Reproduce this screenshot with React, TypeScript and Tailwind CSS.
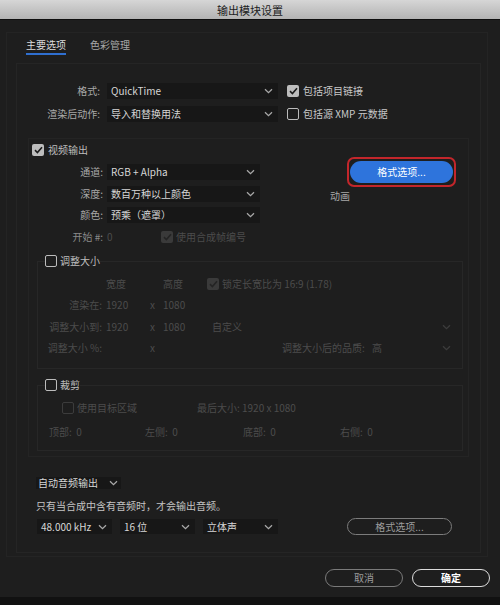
import React from "react";

type CheckProps = {
  checked?: boolean;
  disabled?: boolean;
};

const Check: React.FC<CheckProps> = ({ checked, disabled }) => {
  if (checked) {
    return (
      <span
        className={
          "w-[12px] h-[12px] shrink-0 rounded-[2px] flex items-center justify-center " +
          (disabled ? "bg-[#3a3a3a]" : "bg-[#bdbdbd]")
        }
      >
        <svg width="9" height="8" viewBox="0 0 9 8">
          <path
            d="M1 4.2 3.4 6.5 8 1.2"
            stroke={disabled ? "#242424" : "#1c1c1c"}
            strokeWidth="1.6"
            fill="none"
          />
        </svg>
      </span>
    );
  }
  return (
    <span
      className={
        "w-[12px] h-[12px] shrink-0 rounded-[2px] border-[1.5px] " +
        (disabled ? "border-[#3c3c3c]" : "border-[#bcbcbc]")
      }
    />
  );
};

const Chevron = ({ color = "#a8a8a8" }: { color?: string }) => (
  <svg width="9" height="6" viewBox="0 0 9 6" className="shrink-0">
    <path d="M1 1.2 4.5 4.6 8 1.2" stroke={color} strokeWidth="1.3" fill="none" />
  </svg>
);

type SelectProps = {
  value: string;
  className: string;
};

const Select: React.FC<SelectProps> = ({ value, className }) => (
  <div
    className={
      "bg-[#171717] flex items-center justify-between pl-[4px] pr-[5px] text-[#d6d6d6] " +
      className
    }
  >
    <span>{value}</span>
    <Chevron />
  </div>
);

const Dim: React.FC<{ children?: React.ReactNode; className?: string }> = ({
  children,
  className = "",
}) => <span className={"text-[#4c4c4c] " + className}>{children}</span>;

export default function App() {
  return (
    <div className="w-[500px] h-[605px] bg-[#1e1e1e] flex flex-col overflow-hidden font-['Noto_Sans_CJK_SC','Noto_Sans',sans-serif] text-[10px] leading-[12px] text-[#c8c8c8]">
      <div className="h-[20px] shrink-0 bg-gradient-to-b from-[#d6d6d6] to-[#b3b3b3] border-b border-[#0e0e0e] flex items-center justify-center text-[11px] text-[#1c1c1c]">
        输出模块设置
      </div>

      <div className="flex-1 flex flex-col pl-[6px] pr-[10px]">
        <div className="mt-[12px] mr-[2px] h-[525px] border border-[#242424] flex flex-col">
          {/* tabs */}
          <div className="flex pl-[19px] pt-[5px] gap-[24px] leading-[14px]">
            <div className="text-[#dcdcdc] border-b-2 border-[#2f6fd0] pb-[1px]">主要选项</div>
            <div className="text-[#a8a8a8]">色彩管理</div>
          </div>

          <div className="mt-[8px] ml-[9px] mr-[6px] h-[490px] border border-[#252525] flex flex-col">
            {/* format rows */}
            <div className="mt-[19px] flex items-center h-[16px]">
              <div className="w-[83px] text-right text-[#a8a8a8]">格式:</div>
              <Select value="QuickTime" className="ml-[7px] w-[171px] h-[16px]" />
              <div className="ml-[9px] flex items-center gap-[4px]">
                <Check checked />
                <span>包括项目链接</span>
              </div>
            </div>
            <div className="mt-[7px] flex items-center h-[16px]">
              <div className="w-[83px] text-right text-[#a8a8a8]">渲染后动作:</div>
              <Select value="导入和替换用法" className="ml-[7px] w-[171px] h-[16px]" />
              <div className="ml-[9px] flex items-center gap-[4px]">
                <Check />
                <span>包括源 XMP 元数据</span>
              </div>
            </div>

            {/* video output */}
            <div className="mt-[16px] ml-[11px] w-[441px] h-[319px] border border-[#242424] flex flex-col">
              <div className="mt-[5px] ml-[3px] flex items-center gap-[4px] h-[12px]">
                <Check checked />
                <span className="text-[#bdbdbd]">视频输出</span>
              </div>

              <div className="mt-[1px] flex">
                <div className="pt-[7px] flex flex-col">
                  <div className="flex items-center h-[16px]">
                    <div className="w-[74px] text-right text-[#a8a8a8]">通道:</div>
                    <Select value="RGB + Alpha" className="ml-[4px] w-[153px] h-[16px]" />
                  </div>
                  <div className="mt-[6px] flex items-center h-[16px]">
                    <div className="w-[74px] text-right text-[#a8a8a8]">深度:</div>
                    <Select value="数百万种以上颜色" className="ml-[4px] w-[153px] h-[16px]" />
                  </div>
                  <div className="mt-[5px] flex items-center h-[16px]">
                    <div className="w-[74px] text-right text-[#a8a8a8]">颜色:</div>
                    <Select value="预乘（遮罩）" className="ml-[4px] w-[153px] h-[16px]" />
                  </div>
                </div>
                <div className="ml-[70px] flex flex-col">
                  <div className="ml-[17px] w-[109px] h-[30px] border-2 border-[#c3262b] rounded-[7px] flex items-center justify-center">
                    <div className="w-[103px] h-[22px] rounded-full bg-[#2e74dc] flex items-center justify-center text-white">
                      格式选项...
                    </div>
                  </div>
                  <div className="mt-[3px] text-[#a8a8a8]">动画</div>
                </div>
              </div>

              <div className="mt-[8px] flex items-center h-[12px]">
                <div className="w-[74px] text-right text-[#8a8a8a]">开始 #:</div>
                <Dim className="ml-[4px] w-[54px]">0</Dim>
                <Check checked disabled />
                <Dim className="ml-[3px]">使用合成帧编号</Dim>
              </div>

              {/* resize */}
              <fieldset className="mt-[12px] ml-[8px] w-[426px] border border-[#272727] pb-[14px]">
                <legend className="ml-[7px] flex items-center gap-[3px] h-[12px]">
                  <Check />
                  <span className="text-[#bdbdbd]">调整大小</span>
                </legend>
                <div className="mt-[11px] flex items-center h-[12px]">
                  <div className="w-[64px]" />
                  <Dim className="ml-[4px] w-[44px]">宽度</Dim>
                  <div className="w-[13px]" />
                  <Dim className="w-[44px]">高度</Dim>
                  <Check checked disabled />
                  <Dim className="ml-[3px]">锁定长宽比为 16:9 (1.78)</Dim>
                </div>
                <div className="mt-[9px] flex items-center h-[12px]">
                  <Dim className="w-[64px] text-right">渲染在:</Dim>
                  <Dim className="ml-[4px] w-[44px]">1920</Dim>
                  <Dim className="w-[13px]">x</Dim>
                  <Dim className="w-[44px]">1080</Dim>
                </div>
                <div className="mt-[10px] flex items-center h-[12px]">
                  <Dim className="w-[64px] text-right">调整大小到:</Dim>
                  <Dim className="ml-[4px] w-[44px]">1920</Dim>
                  <Dim className="w-[13px]">x</Dim>
                  <Dim className="w-[44px]">1080</Dim>
                  <div className="w-[248px] flex items-center justify-between pl-[5px] pr-[4px]">
                    <Dim>自定义</Dim>
                    <Chevron color="#3c3c3c" />
                  </div>
                </div>
                <div className="mt-[9px] flex items-center h-[12px]">
                  <Dim className="w-[64px] text-right">调整大小 %:</Dim>
                  <div className="ml-[4px] w-[44px]" />
                  <Dim className="w-[13px]">x</Dim>
                  <div className="w-[44px]" />
                  <div className="ml-[75px] w-[86px]">
                    <Dim>调整大小后的品质:</Dim>
                  </div>
                  <div className="w-[87px] flex items-center justify-between pl-[4px] pr-[4px]">
                    <Dim>高</Dim>
                    <Chevron color="#3c3c3c" />
                  </div>
                </div>
              </fieldset>

              {/* crop */}
              <fieldset className="mt-[10px] ml-[8px] w-[426px] border border-[#272727] pb-[12px]">
                <legend className="ml-[7px] flex items-center gap-[3px] h-[12px]">
                  <Check />
                  <span className="text-[#bdbdbd]">裁剪</span>
                </legend>
                <div className="mt-[11px] flex items-center h-[12px]">
                  <div className="ml-[24px] flex items-center gap-[3px] w-[135px]">
                    <Check disabled />
                    <Dim>使用目标区域</Dim>
                  </div>
                  <Dim>最后大小: 1920 x 1080</Dim>
                </div>
                <div className="mt-[12px] ml-[11px] flex items-center h-[12px]">
                  <Dim className="w-[96px]">顶部:&nbsp;&nbsp;0</Dim>
                  <Dim className="w-[98px]">左侧:&nbsp;&nbsp;0</Dim>
                  <Dim className="w-[97px]">底部:&nbsp;&nbsp;0</Dim>
                  <Dim>右侧:&nbsp;&nbsp;0</Dim>
                </div>
              </fieldset>
            </div>

            {/* audio */}
            <div className="mt-[20px] ml-[19px] flex">
              <Select value="自动音频输出" className="w-[85px] h-[12px] !pl-[2px] !pr-[3px]" />
            </div>
            <div className="mt-[11px] ml-[19px] text-[#c4c4c4]">只有当合成中含有音频时，才会输出音频。</div>
            <div className="mt-[6px] ml-[20px] flex items-center">
              <Select value="48.000 kHz" className="w-[75px] h-[15px]" />
              <Select value="16 位" className="ml-[8px] w-[75px] h-[15px]" />
              <Select value="立体声" className="ml-[8px] w-[75px] h-[15px]" />
              <div className="ml-[69px] w-[105px] h-[17px] rounded-full border border-[#7c7c7c] flex items-center justify-center text-[#9c9c9c]">
                格式选项...
              </div>
            </div>
          </div>
        </div>

        <div className="mt-[12px] flex justify-end gap-[9px]">
          <div className="w-[78px] h-[18px] rounded-full border border-[#7a7a7a] flex items-center justify-center text-[#9a9a9a]">
            取消
          </div>
          <div className="w-[78px] h-[18px] rounded-full border border-[#dcdcdc] flex items-center justify-center text-white font-bold">
            确定
          </div>
        </div>
      </div>

      <div className="h-[8px] shrink-0 bg-[#111111]" />
    </div>
  );
}
